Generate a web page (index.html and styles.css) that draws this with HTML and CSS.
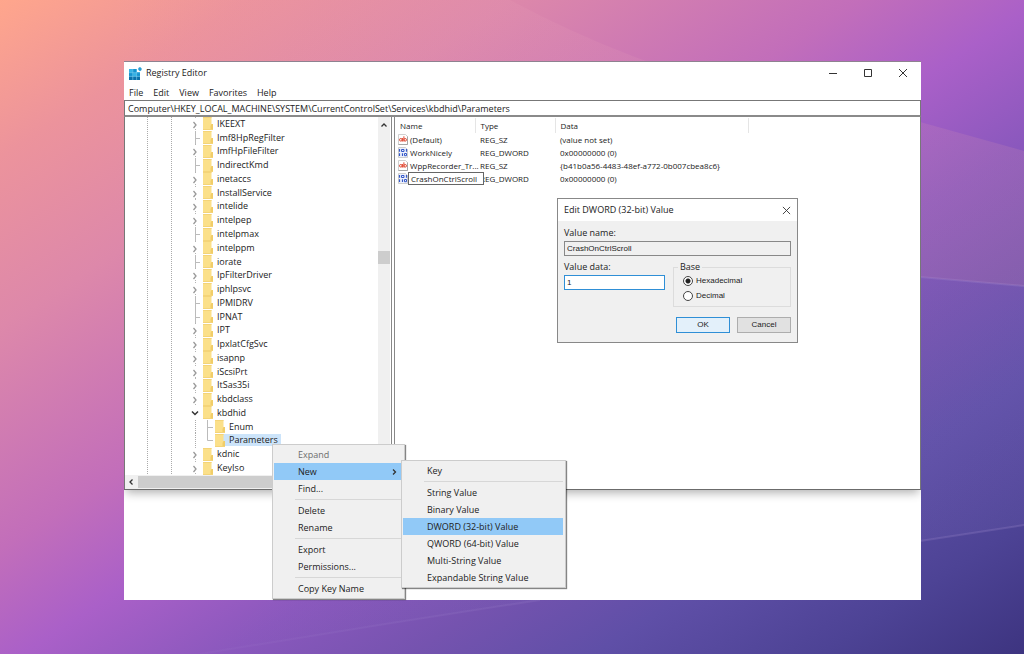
FILE: index.html
```html
<!DOCTYPE html>
<html lang="en">
<head>
<meta charset="utf-8">
<title>Registry Editor</title>
<link rel="stylesheet" href="styles.css">
</head>
<body>
<svg class="backdrop" viewBox="0 0 1024 654" preserveAspectRatio="none" aria-hidden="true">
  <defs>
    <linearGradient id="facet" x1="0" y1="0" x2="1" y2="0"><stop offset="0.1" stop-color="#e8a0b8" stop-opacity="0"/><stop offset="0.55" stop-color="#e8a0b8" stop-opacity="0.16"/><stop offset="1" stop-color="#d090b0" stop-opacity="0.2"/></linearGradient>
    <linearGradient id="ray"><stop offset="0" stop-color="#b8a0dc" stop-opacity="0.05"/><stop offset="1" stop-color="#b8a0dc" stop-opacity="0.2"/></linearGradient>
    <linearGradient id="lower"><stop offset="0" stop-color="#9080cc" stop-opacity="0"/><stop offset="0.5" stop-color="#9080cc" stop-opacity="0.08"/><stop offset="1" stop-color="#9080cc" stop-opacity="0.1"/></linearGradient>
  </defs>
  <path d="M0 0H510Q700 102 920 122L1024 151V286L920 277L0 200Z" fill="url(#facet)"/>
  <path d="M700 265L920 277L1024 286V525L920 541L540 600L200 654Z" fill="url(#lower)"/>
  <path d="M200 654Q370 626 540 600M920 277L1024 286M920 541L1024 525" fill="none" stroke="url(#ray)" stroke-width="2"/>
</svg>
<svg width="0" height="0" class="sprites" aria-hidden="true">
  <symbol id="closed" viewBox="0 0 16 14"><path d="M8.500 0v2M8.500 12v2" stroke="#b4b4b4" stroke-dasharray="1 1"/><path d="M6.500 5L9 8L6.500 11" fill="none" stroke="#999" stroke-width="1.300"/></symbol>
  <symbol id="open" viewBox="0 0 16 14"><path d="M5 5.500L8 8.500L11 5.500" fill="none" stroke="#333" stroke-width="1.500"/></symbol>
  <symbol id="tee" viewBox="0 0 16 14"><path d="M8.500 0V14M9 7.500H13" fill="none" stroke="#bbb"/></symbol>
  <symbol id="pipe" viewBox="0 0 16 14"><path d="M8.500 0V14" stroke="#aaa" stroke-dasharray="1 1"/></symbol>
  <symbol id="branch" viewBox="0 0 12 14"><path d="M4.500 0V14M5 7.500H10" fill="none" stroke="#bbb"/></symbol>
  <symbol id="elbow" viewBox="0 0 12 14"><path d="M4.500 0V7.500H10" fill="none" stroke="#bbb"/></symbol>
  <symbol id="folder" viewBox="0 0 10 13"><path d="M0 0H8.500V7H10V13H0Z" fill="#fbe08a"/><path d="M8.500 7H10V13H7.500V9Z" fill="#f1cd68"/><path d="M0 0H8.500V1H0ZM0 12H10V13H0Z" fill="#f4d478"/></symbol>
  <symbol id="str" viewBox="0 0 10 11"><path d="M.5.500H7.500L9.500 2.500V10.500H.5Z" fill="#fff" stroke="#c4c4c4" stroke-width=".8"/><path d="M9.500 2.500V10.500H.5" fill="none" stroke="#999" stroke-width=".8"/><circle cx="2.800" cy="5.800" r="1.300" fill="none" stroke="#e0452f"/><path d="M4.400 4V7.500M5.900 2.300V7.500" stroke="#e0452f"/><circle cx="7.200" cy="5.800" r="1.300" fill="none" stroke="#e0452f"/></symbol>
  <symbol id="bin" viewBox="0 0 10 11"><path d="M.5.500H7.500L9.500 2.500V10.500H.5Z" fill="#eef1fc" stroke="#c4c4c4" stroke-width=".8"/><path d="M1.500 2V4.800M8.500 2V4.800M1.500 6.200V9M4.500 6.200V9" stroke="#3559c8" stroke-width="1.200"/><path d="M3.500 2.500H6V4.500H3.500ZM6.500 6.500H8.500V8.700H6.500Z" fill="none" stroke="#3559c8"/></symbol>
</svg>
<main class="shot">
  <section class="window">
    <header class="titlebar">
      <svg class="logo" viewBox="0 0 13 13" aria-hidden="true"><path d="M0 2H8V5H11V13H0Z" fill="#1593cf"/><path d="M0 2H3.500V5.500H0ZM4.300 6H7.300V9H4.300Z" fill="#35b3e6"/><path d="M0 9.500H11V13H0Z" fill="#0b70aa"/><path d="M3.800 2V13M7.600 2V13M0 5.700H11M0 9.400H11" stroke="#7fd0f0" stroke-width=".6"/><path d="M9.300 1L11 0L12.600 1.200V3L11 4.200L9.300 3Z" fill="#2a9dd2"/></svg>
      <h1 class="title">Registry Editor</h1>
      <div class="controls">
        <button aria-label="Minimize"><svg viewBox="0 0 10 10"><path d="M1 5.500H9"/></svg></button>
        <button aria-label="Maximize"><svg viewBox="0 0 10 10"><path d="M1.500 1.500H8.500V8.500H1.500Z"/></svg></button>
        <button aria-label="Close"><svg viewBox="0 0 10 10"><path d="M1 1L9 9M9 1L1 9"/></svg></button>
      </div>
    </header>
    <nav class="menubar"><button>File</button><button>Edit</button><button>View</button><button>Favorites</button><button>Help</button></nav>
    <input class="address" aria-label="Key path" value="Computer\HKEY_LOCAL_MACHINE\SYSTEM\CurrentControlSet\Services\kbdhid\Parameters">
    <div class="panes">
      <div class="side">
        <div class="treewrap">
          <ul class="tree">
            <li><svg class="twist"><use href="#closed"/></svg><svg class="folder"><use href="#folder"/></svg><span>IKEEXT</span></li>
            <li><svg class="twist"><use href="#tee"/></svg><svg class="folder"><use href="#folder"/></svg><span>Imf8HpRegFilter</span></li>
            <li><svg class="twist"><use href="#closed"/></svg><svg class="folder"><use href="#folder"/></svg><span>ImfHpFileFilter</span></li>
            <li><svg class="twist"><use href="#tee"/></svg><svg class="folder"><use href="#folder"/></svg><span>IndirectKmd</span></li>
            <li><svg class="twist"><use href="#closed"/></svg><svg class="folder"><use href="#folder"/></svg><span>inetaccs</span></li>
            <li><svg class="twist"><use href="#closed"/></svg><svg class="folder"><use href="#folder"/></svg><span>InstallService</span></li>
            <li><svg class="twist"><use href="#closed"/></svg><svg class="folder"><use href="#folder"/></svg><span>intelide</span></li>
            <li><svg class="twist"><use href="#closed"/></svg><svg class="folder"><use href="#folder"/></svg><span>intelpep</span></li>
            <li><svg class="twist"><use href="#tee"/></svg><svg class="folder"><use href="#folder"/></svg><span>intelpmax</span></li>
            <li><svg class="twist"><use href="#closed"/></svg><svg class="folder"><use href="#folder"/></svg><span>intelppm</span></li>
            <li><svg class="twist"><use href="#tee"/></svg><svg class="folder"><use href="#folder"/></svg><span>iorate</span></li>
            <li><svg class="twist"><use href="#closed"/></svg><svg class="folder"><use href="#folder"/></svg><span>IpFilterDriver</span></li>
            <li><svg class="twist"><use href="#closed"/></svg><svg class="folder"><use href="#folder"/></svg><span>iphlpsvc</span></li>
            <li><svg class="twist"><use href="#tee"/></svg><svg class="folder"><use href="#folder"/></svg><span>IPMIDRV</span></li>
            <li><svg class="twist"><use href="#tee"/></svg><svg class="folder"><use href="#folder"/></svg><span>IPNAT</span></li>
            <li><svg class="twist"><use href="#closed"/></svg><svg class="folder"><use href="#folder"/></svg><span>IPT</span></li>
            <li><svg class="twist"><use href="#closed"/></svg><svg class="folder"><use href="#folder"/></svg><span>IpxlatCfgSvc</span></li>
            <li><svg class="twist"><use href="#closed"/></svg><svg class="folder"><use href="#folder"/></svg><span>isapnp</span></li>
            <li><svg class="twist"><use href="#closed"/></svg><svg class="folder"><use href="#folder"/></svg><span>iScsiPrt</span></li>
            <li><svg class="twist"><use href="#closed"/></svg><svg class="folder"><use href="#folder"/></svg><span>ItSas35i</span></li>
            <li><svg class="twist"><use href="#closed"/></svg><svg class="folder"><use href="#folder"/></svg><span>kbdclass</span></li>
            <li><svg class="twist"><use href="#open"/></svg><svg class="folder"><use href="#folder"/></svg><span>kbdhid</span></li>
            <li><svg class="twist"><use href="#pipe"/></svg><svg class="link"><use href="#branch"/></svg><svg class="folder"><use href="#folder"/></svg><span>Enum</span></li>
            <li class="selected"><svg class="twist"><use href="#pipe"/></svg><svg class="link"><use href="#elbow"/></svg><svg class="folder"><use href="#folder"/></svg><span>Parameters</span></li>
            <li><svg class="twist"><use href="#closed"/></svg><svg class="folder"><use href="#folder"/></svg><span>kdnic</span></li>
            <li><svg class="twist"><use href="#closed"/></svg><svg class="folder"><use href="#folder"/></svg><span>KeyIso</span></li>
          </ul>
          <div class="vbar"><svg class="arrow" viewBox="0 0 8 8"><path d="M1.500 5.500L4 3L6.500 5.500"/></svg><div class="vthumb"></div></div>
        </div>
        <div class="hbar"><svg class="arrow" viewBox="0 0 8 8"><path d="M5.500 1.500L3 4L5.500 6.500"/></svg><div class="hthumb"></div></div>
      </div>
      <div class="values">
        <table>
          <colgroup><col class="c-name"><col class="c-type"><col class="c-data"><col></colgroup>
          <thead><tr><th>Name</th><th>Type</th><th>Data</th><th></th></tr></thead>
          <tbody>
            <tr><td><div class="cell"><svg class="kind"><use href="#str"/></svg>(Default)</div></td><td>REG_SZ</td><td>(value not set)</td><td></td></tr>
            <tr><td><div class="cell"><svg class="kind"><use href="#bin"/></svg>WorkNicely</div></td><td>REG_DWORD</td><td>0x00000000 (0)</td><td></td></tr>
            <tr><td><div class="cell"><svg class="kind"><use href="#str"/></svg>WppRecorder_Tr...</div></td><td>REG_SZ</td><td>{b41b0a56-4483-48ef-a772-0b007cbea8c6}</td><td></td></tr>
            <tr><td><div class="cell editing"><svg class="kind"><use href="#bin"/></svg><input class="rename" aria-label="New value name" value="CrashOnCtrlScroll"></div></td><td>REG_DWORD</td><td>0x00000000 (0)</td><td></td></tr>
          </tbody>
        </table>
      </div>
    </div>
  </section>

  <form class="dialog" aria-label="Edit DWORD (32-bit) Value">
    <header class="dialog-title"><h2>Edit DWORD (32-bit) Value</h2><button type="button" aria-label="Close dialog"><svg viewBox="0 0 10 10"><path d="M1 1L9 9M9 1L1 9"/></svg></button></header>
    <div class="dialog-body">
      <label for="vname">Value name:</label>
      <input id="vname" class="field readonly" readonly value="CrashOnCtrlScroll">
      <div class="split">
        <div class="vdata"><label for="vdata">Value data:</label><input id="vdata" class="field active" value="1"></div>
        <fieldset><legend>Base</legend>
          <label class="radio"><input type="radio" name="base" checked>Hexadecimal</label>
          <label class="radio"><input type="radio" name="base">Decimal</label>
        </fieldset>
      </div>
      <div class="actions"><button type="button" class="btn primary">OK</button><button type="button" class="btn">Cancel</button></div>
    </div>
  </form>

  <div class="menu context" role="menu">
    <button role="menuitem" disabled>Expand</button>
    <button role="menuitem" class="on">New<svg class="arrow" viewBox="0 0 8 8"><path d="M3 1.500L5.500 4L3 6.500"/></svg></button>
    <button role="menuitem">Find...</button>
    <hr>
    <button role="menuitem">Delete</button>
    <button role="menuitem">Rename</button>
    <hr>
    <button role="menuitem">Export</button>
    <button role="menuitem">Permissions...</button>
    <hr>
    <button role="menuitem">Copy Key Name</button>
  </div>
  <div class="menu submenu" role="menu">
    <button role="menuitem">Key</button>
    <hr>
    <button role="menuitem">String Value</button>
    <button role="menuitem">Binary Value</button>
    <button role="menuitem" class="on">DWORD (32-bit) Value</button>
    <button role="menuitem">QWORD (64-bit) Value</button>
    <button role="menuitem">Multi-String Value</button>
    <button role="menuitem">Expandable String Value</button>
  </div>
</main>
</body>
</html>
```

FILE: styles.css
```css
* { box-sizing: border-box; }
body {
  margin: 0;
  min-height: 100vh;
  padding: 61px 103px 54px 124px;
  display: flex;
  font: 9px/12px "Open Sans", "Noto Sans", sans-serif;
  color: #222;
  background: linear-gradient(to bottom right, #ffa68c 0%, #ec939c 12%, #dd88aa 25%, #c26eba 42%, #aa60c8 51%, #8a58bd 61%, #7553af 70%, #5f4fa7 79%, #4d4395 90%, #3d3480 100%);
}
button, input { font: inherit; color: inherit; }
button { border: 0; padding: 0; background: none; }
.backdrop { position: absolute; inset: 0; width: 100%; height: 100%; }
.sprites { position: absolute; }

.shot {
  position: relative;
  flex: 1;
  display: flex;
  padding-bottom: 110px;
  background: #fff;
}
.window {
  flex: 1;
  min-width: 0;
  display: flex;
  flex-direction: column;
  background: #fff;
  border-top: 1px solid #8e8290;
  border-bottom: 1px solid #6b6b6b;
  box-shadow: 0 5px 9px -2px #0000004d;
  clip-path: inset(0 0 -20px 0);
}
.titlebar { display: flex; align-items: center; height: 22px; padding-left: 5px; }
.logo { width: 13px; height: 13px; }
.title { margin: 0 0 0 4px; flex: 1; font-size: 9px; font-weight: 400; }
.controls { display: flex; padding-right: 1px; }
.controls button { width: 35px; height: 20px; }
.controls svg { display: block; width: 10px; height: 10px; margin: auto; fill: none; stroke: #333; }
.menubar { display: flex; gap: 10px; height: 16px; padding: 1px 0 0 5px; }
.address {
  height: 17px;
  padding: 0 3px;
  border: 1px solid #777;
  border-bottom: 2px solid #8a8a8a;
  background: #fff;
}
.panes { flex: 1; min-height: 0; display: flex; border: solid #777; border-width: 0 1px; }
.side { width: 267px; display: flex; flex-direction: column; border-right: 1px solid #888; }
.treewrap { flex: 1; min-height: 0; display: flex; }
.tree {
  flex: 1;
  margin: 0;
  padding: 0 0 0 62px;
  list-style: none;
  display: flex;
  flex-direction: column;
  background:
    repeating-linear-gradient(#aaa 0 1px, #fff 1px 2px) 22px 0 / 1px 100% no-repeat,
    repeating-linear-gradient(#aaa 0 1px, #fff 1px 2px) 46px 0 / 1px 100% no-repeat;
}
.tree li { flex: 1; min-height: 0; display: flex; align-items: center; }
.tree span { padding-left: 4px; }
.twist { width: 16px; height: 14px; margin: -1px 0; }
.link { width: 12px; height: 14px; margin: -1px 0; }
.folder { width: 10px; height: 13px; }
.selected span { background: #cce4fa; padding-right: 3px; }
.selected .folder { background: #cce4fa; }
.vbar { width: 12px; margin-right: 1px; padding-top: 4px; background: #f0f0f0; }
.arrow { display: block; width: 8px; height: 8px; fill: none; stroke: #333; stroke-width: 1.3; }
.vbar .arrow { margin: 0 auto; }
.vthumb { height: 13px; margin-top: 122px; background: #cdcdcd; }
.hbar { display: flex; align-items: center; gap: 3px; height: 14px; padding-left: 2px; background: #f0f0f0; }
.hthumb { flex: 1; height: 12px; background: #cdcdcd; }
.values { flex: 1; min-width: 0; margin-left: 2px; padding-top: 1px; border-left: 1px solid #888; }

table { width: 100%; table-layout: fixed; border-collapse: collapse; font-size: 8px; }
.c-name, .c-type { width: 80px; }
.c-data { width: 193px; }
th, td { height: 13px; padding: 0 0 0 5px; text-align: left; font-weight: 400; white-space: nowrap; line-height: 12px; }
th { height: 15px; border-right: 1px solid #e5e5e5; }
th:last-child { border-right: 0; }
.cell { display: flex; align-items: center; height: 12px; gap: 2px; margin-left: -2px; }
.kind { width: 10px; height: 11px; flex: none; }
.editing { gap: 0; }
.rename { flex: none; width: 76px; height: 13px; padding: 0 2px; border: 1px solid #666; background: #fff; position: relative; }

.dialog {
  position: absolute;
  left: 433px;
  top: 137px;
  width: 241px;
  border: 1px solid #888;
  background: #f0f0f0;
}
.dialog-title { display: flex; justify-content: space-between; align-items: center; height: 22px; padding: 0 6px; background: #fff; }
.dialog-title h2 { margin: 0; font-size: 9px; font-weight: 400; }
.dialog-title svg { display: block; width: 9px; height: 9px; fill: none; stroke: #333; }
.dialog-body { padding: 6px 6px 9px; }
.dialog-body label { display: block; }
.field { display: block; width: 100%; height: 15px; margin-top: 2px; padding: 0 2px; border: 1px solid #888; background: #fff; font: 8px/12px "Liberation Sans", sans-serif; }
.readonly { background: #f0f0f0; }
.active { border-color: #2f8fd6; outline: 0; }
.split { display: flex; gap: 8px; margin-top: 5px; }
.vdata { flex: 0 0 101px; }
fieldset { flex: 1; min-width: 0; margin: 0; padding: 0 9px 3px; border: 1px solid #dcdcdc; }
legend { margin-left: -5px; padding: 0 2px; }
.dialog-body .radio { display: flex; align-items: center; gap: 3px; height: 15px; font: 8px/12px "Liberation Sans", sans-serif; }
.radio input { appearance: none; width: 10px; height: 10px; margin: 0; border: 1px solid #444; border-radius: 50%; background: #fff; }
.radio input:checked { background: radial-gradient(circle, #222 0 2px, #fff 3px); }
.actions { display: flex; justify-content: flex-end; gap: 7px; margin-top: 10px; }
.btn { width: 54px; height: 16px; border: 1px solid #adadad; background: #e1e1e1; font: 8px/12px "Liberation Sans", sans-serif; }
.primary { border-color: #2f8fd6; background: #e3f0fa; }

.menu {
  position: absolute;
  display: flex;
  flex-direction: column;
  padding: 1px 2px 1px 1px;
  border: 1px solid #ccc;
  background: #f0f0f0;
  box-shadow: 1px 1px 1px #0000007a;
}
.menu button { display: flex; justify-content: space-between; align-items: center; height: 17px; padding: 0 4px 0 24px; text-align: left; }
.menu button:disabled { color: #6d6d6d; }
.menu .on { background: #91c9f7; }
.menu hr { width: calc(100% - 21px); height: 1px; margin: 2px 0 2px 21px; border: 0; background: #d7d7d7; }
.context { left: 148px; top: 383px; width: 133px; }
.submenu { left: 277px; top: 399px; width: 165px; }
```
